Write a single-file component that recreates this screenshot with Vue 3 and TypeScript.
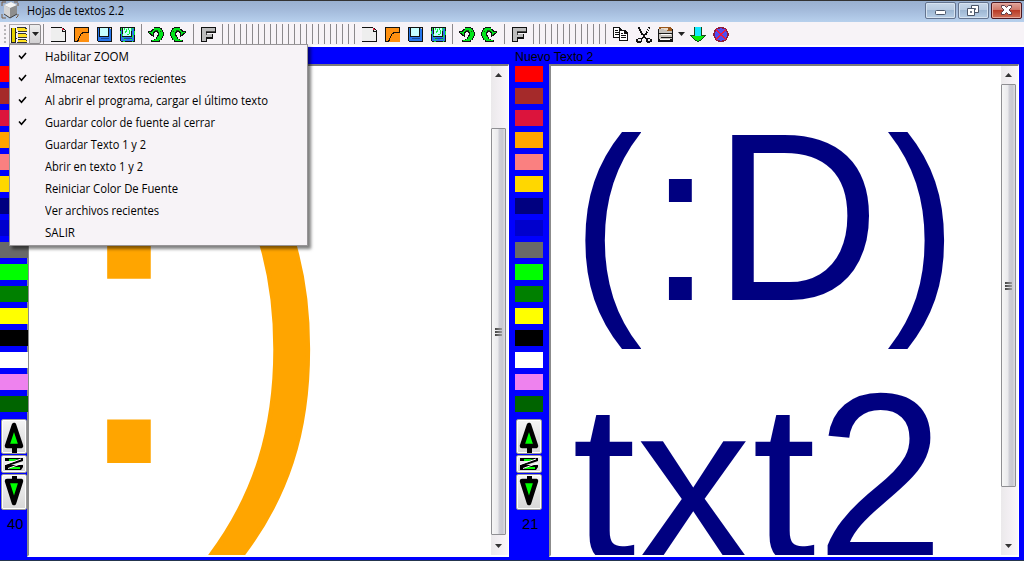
<script setup lang="ts">
interface Pane {
  id: string
  title: string
  size: number
  text: string[]
}

interface MenuEntry {
  label: string
  checked: boolean
  width: number
}

const palette: string[] = [
  '#ff0000', '#a52a2a', '#dc143c', '#ffa500', '#fa8080', '#ffd700', '#000080', '#0000cd',
  '#696969', '#00ff00', '#008000', '#ffff00', '#000000', '#ffffff', '#ee82ee', '#006400',
]

const panes: Pane[] = [
  { id: 'one', title: '', size: 40, text: [':)'] },
  { id: 'two', title: 'Nuevo Texto 2', size: 21, text: ['(:D)', 'txt2'] },
]

const menu: MenuEntry[] = [
  { label: 'Habilitar ZOOM', checked: true, width: 84 },
  { label: 'Almacenar textos recientes', checked: true, width: 141 },
  { label: 'Al abrir el programa, cargar el último texto', checked: true, width: 223 },
  { label: 'Guardar color de fuente al cerrar', checked: true, width: 170 },
  { label: 'Guardar Texto 1 y 2', checked: false, width: 101 },
  { label: 'Abrir en texto 1 y 2', checked: false, width: 98 },
  { label: 'Reiniciar Color De Fuente', checked: false, width: 133 },
  { label: 'Ver archivos recientes', checked: false, width: 114 },
  { label: 'SALIR', checked: false, width: 30 },
]

const fileTools: string[] = ['new', 'open', 'save', 'saveas', 'sep', 'undo', 'redo', 'sep', 'font']
const toolbar: string[] = [
  ...fileTools, ...Array<string>(23).fill('sep'),
  ...fileTools, ...Array<string>(13).fill('sep'),
  'copy', 'cut', 'paste', 'down', 'stop',
]

function glyphKind(char: string): string {
  if (char === '(') return 'paren-left'
  if (char === ')') return 'paren-right'
  if (char === ':') return 'colon'
  return char === 't' || char === 'x' ? 'lower' : 'upper'
}
</script>

<template>
  <div class="window">
    <header class="titlebar">
      <svg class="app-icon" width="18" height="18" viewBox="0 0 18 18">
        <path d="M1 1h4M13 1h4M1 1v4M17 2v3M1 13v4h4M17 13v2l-2 2" stroke="#765b42" fill="none" />
        <path d="M3 4l7-3 6 3v9l-7 4-6-4z" fill="#8d8d8d" />
        <path d="M3 4l7-3 6 3-7 3z" fill="#f4f4f4" />
        <path d="M3 4l6 3v10l-6-4z" fill="#d3d3d3" />
        <path d="M3 13l6 4 7-4" stroke="#404040" fill="none" />
      </svg>
      <svg class="caption" width="110" height="20"><text x="0" y="14" textLength="97" lengthAdjust="spacingAndGlyphs">Hojas de textos 2.2</text></svg>
      <div class="controls">
        <span class="control"><svg width="29" height="14" viewBox="0 0 29 14"><rect x="9.5" y="7.5" width="10" height="4" rx="1" fill="#fff" stroke="#4b5669" /></svg></span>
        <span class="control">
          <svg width="29" height="14" viewBox="0 0 29 14" fill="#fff" stroke="#4b5669">
            <path d="M12.500 2.500h7v7h-7z" /><path d="M15.500 5.500h1v1h-1z" fill="#aebfd3" />
            <path d="M8.500 5.500h7v7h-7z" /><path d="M11.500 8.500h1v1h-1z" fill="#aebfd3" />
          </svg>
        </span>
        <span class="control close">
          <svg width="29" height="14" viewBox="0 0 29 14"><path d="M9.500 2.500h3l2 2 2-2h3v2l-2.500 2.500 2.500 2.500v2h-3l-2-2-2 2h-3v-2L12 7 9.500 4.500z" fill="#fff" stroke="#5c3c46" /></svg>
        </span>
      </div>
    </header>

    <nav class="toolbar">
      <div class="grip"></div>
      <div class="menu-button">
        <svg width="18" height="17" viewBox="0 0 18 17" shape-rendering="crispEdges">
          <path d="M1 1h4v14H1z" fill="#e8d400" />
          <path d="M0 1h1v15H0zM4 1h1v15H4zM1 15h4v1H1z" fill="#222" />
          <path d="M6 1h10v3H7zM7 7h9v3H7zM7 13h9v2H7z" fill="#ffe020" />
          <path d="M6 0h9v1H6zM7 4h9v1H7zM7 6h8v1H7zM7 10h9v1H7zM7 12h8v1H7zM6 15h10v1H6zM14 1h2v1h-2zM15 7h1v1h-1zM15 13h1v1h-1zM5 5h1v1H5zM5 11h1v1H5z" fill="#333" />
        </svg>
      </div>
      <div class="menu-arrow"><svg width="7" height="4"><path d="M0 0h7L3.500 4z" fill="#222" /></svg></div>
      <span class="first-separator"></span>
      <div v-for="(tool, i) in toolbar" :key="i" class="tool" :class="tool">
        <svg v-if="tool !== 'sep'" class="glyph" width="17" height="16" viewBox="0 0 17 16" shape-rendering="crispEdges">
          <template v-if="tool === 'new'">
            <path d="M0 0h11l4 4v11H0z" fill="#eee" />
            <path d="M0 0h11v1H0zM14 4h1v11H0v-1h14zM11 1h1v3h2v1h-3zM12 1h1v1h-1zM13 2h1v1h-1zM14 3h1v1h-1z" fill="#111" />
            <path d="M11 1h1v1h1v1h-2z" fill="#e31b38" />
          </template>
          <template v-else-if="tool === 'open'">
            <path d="M0 0h15v15H0z" fill="#ff9010" />
            <path d="M0 0h15v1H0zM0 0h1v15H0zM0 14h4v1H0zM3 13h2v1H3zM4 11h1v2H4zM5 9h1v2H5zM6 7h1v2H6zM7 6h2v1H7zM8 5h7v1H8zM14 0h1v6h-1z" fill="#17120c" />
          </template>
          <template v-else-if="tool === 'save' || tool === 'saveas'">
            <path d="M0 0h15v15H1l-1-1z" fill="#111" />
            <path d="M1 1h13v13H1z" fill="#2676ec" />
            <path d="M2 0h10v10H2z" fill="#111" />
            <path d="M3 1h8v8H3z" fill="#c6ffff" />
            <path d="M4 11h8v1H4z" fill="#194998" />
            <path d="M13 1h1v1h-1z" fill="#ffdf9a" />
            <path v-if="tool === 'saveas'" d="M1 1h1v2H1zM0 4h1v3H0zM2 7h1v2H2zM3 10h1v1H3zM4 12h2v1H4zM4 1h1v2H4zM5 4h1v2H5zM6 2h1v3H6zM8 1h1v2H8zM9 3h1v4H9zM11 1h1v3h-1zM7 7h2v1H7zM12 8h1v3h-1zM14 4h1v4h-1zM10 12h2v1h-2zM3 14h2v1H3zM12 14h1v1h-1zM13 1h1v1h-1z" fill="#12ef39" />
          </template>
          <g v-else-if="tool === 'undo' || tool === 'redo'" :transform="tool === 'redo' ? 'translate(16 0) scale(-1 1)' : undefined">
            <path d="M6 0h6v1h2v2h1v2h1v4h-1v2h-1v2h-2v2H3v-2h3v-1h2v-2h1V8h1V6H9V5H7v1H6v4H5V9H3V8H2V7H1V6H0V4h3V3h1V2h2z" fill="#111" />
            <path d="M6 1h6v1h1v1h1v2h1v4h-1v2h-1v2h-2v1H4v-1h3v-1h2v-2h1V9h1V5h-1V4H6v1H5v3H4V7H3V6H1V5h3V4h1V3h1z" fill="#00e51a" />
            <path d="M7 3h3v1H7zM12 4h1v1h-1z" fill="#165715" />
          </g>
          <template v-else-if="tool === 'font'">
            <path d="M0 0h15v6H6v1h6v5H6v3H0z" fill="#111" />
            <path d="M1 1h13v4H5v2h6v3H5v4H1z" fill="#bcbcbc" />
            <path d="M5 5h9V4H5zM6 6h-1v2h1z" fill="#4a4a4a" />
          </template>
          <template v-else-if="tool === 'copy'">
            <path d="M0 0h6l3 3v8H0z" fill="#111" /><path d="M1 1h5v3h2v6H1z" fill="#fff" />
            <path d="M6 3h6l3 3v8H6z" fill="#111" /><path d="M7 4h4v3h3v6H7z" fill="#fff" />
            <path d="M2 3h3v1H2zM2 5h4v1H2zM2 7h4v1H2zM8 6h2v1H8zM8 8h5v1H8zM8 10h5v1H8z" fill="#111" />
          </template>
          <template v-else-if="tool === 'cut'">
            <path d="M2 0h2v2h1v2h1v2h1v1h2V6h1V4h1V2h1V0h2v2h-1v2h-1v2h-1v2H9v2h1v1h4v1h2v3h-2v1h-3v-1h-1v-3H9v-1H7v1H6v3H5v1H1v-1H0v-3h2v-1h4v-1h1V8H5V6H4V4H3V2H2z" fill="#111" />
            <path d="M4 1h1v2h1v2h1v1H6V4H5V2H4zM12 1h1v2h-1zM11 3h1v2h-1zM2 12h3v2H2zM12 12h2v2h-2z" fill="#eee" />
          </template>
          <template v-else-if="tool === 'paste'">
            <path d="M0 2h15v13H0z" fill="#161616" />
            <path d="M1 2h13v10H1z" fill="#c4c0bb" />
            <path d="M1 0h12v1h1v3H9V3H6V2H1z" fill="#9b571b" />
            <path d="M3 1h7v2H6V2H3z" fill="#e8d9c8" />
            <path d="M1 6h13v1H1zM3 10h11v1H3z" fill="#171717" />
            <path d="M3 7h10v1H3zM2 12h10v1H2z" fill="#fff" />
          </template>
          <template v-else-if="tool === 'down'">
            <path d="M4 0h8v8h4v1h-1v1h-1v1h-1v1h-1v1h-1v1h-2v1H7v-1H5v-1H4v-1H3v-1H2v-1H1V9H0V8h4z" fill="#174b17" />
            <path d="M5 0h6v9H5z" fill="#12e9ff" />
            <path d="M2 9h12v1h-1v1h-1v1h-1v1H9v1H7v-1H5v-1H4v-1H3v-1H2z" fill="#0aed0a" />
          </template>
          <template v-else>
            <circle cx="8" cy="7.500" r="7" fill="#514cf0" stroke="#8c1c40" stroke-width="1.500" />
            <path d="M3 2.500l10 10M13 2.500L3 12.500" stroke="#ed183c" stroke-width="1.400" />
          </template>
        </svg>
        <svg v-if="tool === 'paste'" class="drop" width="7" height="4"><path d="M0 0h7L3.500 4z" fill="#222" /></svg>
      </div>
    </nav>

    <main class="workspace">
      <section v-for="pane in panes" :key="pane.id" class="pane" :class="pane.id">
        <h2 class="pane-title">{{ pane.title }}</h2>
        <div class="pane-body">
          <aside class="side">
            <i v-for="color in palette" :key="color" class="swatch" :style="{ background: color }"></i>
            <div class="steppers">
              <span class="step tall"><svg width="22" height="33" viewBox="0 0 22 33"><path d="M11 5L18 26H4z" fill="#0f0" stroke="#000" stroke-width="4.500" stroke-linejoin="round" /><path d="M9 28h5v5H9z" /></svg></span>
              <span class="step"><svg width="22" height="16" viewBox="0 0 22 16"><path d="M2 2h18v3L8 9h12v2l-2 3H2V9l11-4H2z" fill="#000" /><path d="M6 3h9l-4 2H6zM6 13h11v-2H9z" fill="#0f0" /><path d="M2 8.500L18 3M5 12.500L20 7" stroke="#fff" stroke-width="1" fill="none" /></svg></span>
              <span class="step tall bottom"><svg width="22" height="34" viewBox="0 0 22 34"><path d="M11 28L18 6H4z" fill="#0f0" stroke="#000" stroke-width="4.500" stroke-linejoin="round" /><path d="M9 1h5v4H9z" /></svg></span>
            </div>
            <span class="size">{{ pane.size }}</span>
          </aside>
          <div class="editor">
            <div class="document">
              <div v-for="line in pane.text" :key="line" class="line"><span v-for="(char, n) in line" :key="n" :class="glyphKind(char)">{{ char }}</span></div>
            </div>
            <div class="scrollbar">
              <svg class="arrow" width="7" height="4"><path d="M0 4h7L3.500 0z" fill="#333" /></svg>
              <div class="thumb"><i></i><i></i><i></i></div>
              <svg class="arrow" width="7" height="4"><path d="M0 0h7L3.500 4z" fill="#333" /></svg>
            </div>
          </div>
        </div>
      </section>
    </main>
    <footer class="edge"></footer>

    <ul class="menu">
      <li v-for="entry in menu" :key="entry.label">
        <svg class="check" width="9" height="8"><path v-if="entry.checked" d="M1 3.500l2.500 2.700L8 1" stroke="#000" stroke-width="1.600" fill="none" /></svg>
        <svg class="label" width="250" height="22"><text x="0" y="15" :textLength="entry.width" lengthAdjust="spacingAndGlyphs">{{ entry.label }}</text></svg>
      </li>
    </ul>
  </div>
</template>

<style>
body { margin: 0; overflow: hidden; }
</style>

<style scoped>
* { box-sizing: border-box; }
svg { display: block; flex: none; }
.window { position: relative; display: flex; flex-direction: column; width: 1024px; height: 561px; overflow: hidden; background: #00f; font-family: "Open Sans", sans-serif; }
.titlebar { display: flex; height: 22px; flex: none; border-top: 1px solid #333; background: linear-gradient(#99b0d0, #a4bbdb 45%, #b7d0ed); }
.app-icon { margin-left: 1px; }
.caption { margin-left: 8px; font-size: 12px; }
.controls { display: flex; gap: 2px; margin-left: auto; padding: 1px 2px 0 0; }
.control { width: 31px; height: 17px; border: 1px solid #64748f; border-radius: 2px; background: linear-gradient(#c6d6e8, #b8cbe1 45%, #9eb7d3 50%, #b7cee6); box-shadow: inset 0 0 0 1px #d6e3f1; }
.control.close { border-color: #4c1720; background: linear-gradient(#dfa49b, #cf7869 45%, #b93b27 50%, #cf7059); box-shadow: inset 0 0 0 1px #e6a99e; }
.toolbar { display: flex; flex: none; height: 25px; background: #f7f3f7; border-bottom: 2px solid #fff; }
.grip { width: 2px; height: 18px; margin: 3px 3px 0 4px; background: repeating-linear-gradient(#b8b5b8 0 2px, transparent 2px 4px); }
.menu-button { width: 20px; height: 20px; margin-top: 2px; padding: 2px 1px; border: 1px solid #aaa6aa; border-right: 0; background: #f7f3f7; }
.menu-arrow { display: flex; justify-content: center; width: 12px; height: 20px; margin-top: 2px; padding-top: 7px; border: 1px solid #8e8b8e; border-radius: 0 2px 2px 0; background: linear-gradient(#eee, #d2d0d2); }
.first-separator { width: 1px; height: 20px; margin: 2px 4px 0 2px; background: #8c898c; }
.tool { display: flex; flex: none; width: 23px; padding: 5px 0 0 3px; }
.tool.sep { width: 6px; padding: 2px 0 0 1px; }
.tool.sep::before { content: ""; width: 1px; height: 20px; background: #8c898c; }
.tool.undo, .tool.redo { padding-left: 2px; }
.tool.redo { padding-left: 1px; }
.tool.paste { width: 31px; padding-left: 2px; }
.drop { margin: 5px 0 0 3px; }
.workspace { display: flex; flex: none; height: 513px; }
.pane { display: flex; flex-direction: column; width: 509px; }
.pane.two { width: 510px; padding-left: 6px; }
.pane-title { height: 17px; margin: 0; font: 12.300px/20px "Liberation Sans", Arial, sans-serif; color: #000; flex: none; }
.pane-body { display: flex; height: 493px; }
.side { display: flex; flex-direction: column; flex: none; width: 27px; padding-top: 2px; position: relative; z-index: 1; }
.two .side { width: 34px; }
.swatch { flex: none; width: 28px; height: 16px; margin-bottom: 6px; }
.steppers { display: flex; flex-direction: column; gap: 1px; width: 26px; margin-left: 1px; padding-top: 1px; }
.step { display: flex; justify-content: center; height: 18px; border: 1px solid #999; border-radius: 2px; background: linear-gradient(#f5f5f5, #d7d7d7); box-shadow: inset 0 0 0 1px #fff; }
.step.tall { height: 35px; }
.step.tall.bottom { height: 36px; }
.size { margin: 4px 0 0 7px; font: 14.670px/20px "Liberation Sans", Arial, sans-serif; color: #000; }
.editor { display: flex; flex: 1; border-top: 2px solid #7c7c7c; border-left: 2px solid #8b8b8b; border-right: 1px solid #fff; border-bottom: 2px solid #fff; background: #fff; overflow: hidden; }
.document { flex: 1; min-width: 0; height: 489px; overflow: hidden; font-family: "Liberation Sans", Arial, sans-serif; white-space: nowrap; }
.line span { display: inline-block; }
.one .document { padding-left: 38px; font-size: 440px; line-height: 506px; color: #ffa500; }
.one .line { height: 506px; margin-top: -8px; }
.one .colon { transform: scale(1.04, .98); transform-origin: 40px 405px; }
.one .paren-right { transform: scale(.84, 1.01); transform-origin: 118px 290px; -webkit-text-stroke: 5px #ffa500; }
.two .document { padding-left: 21px; font-size: 231px; line-height: 260px; color: #000080; }
.two .line { height: 260px; }
.two .line:first-child { margin-top: 24px; }
.two .upper { transform: scale(1, 1.037); transform-origin: 0 210px; }
.two .lower { transform: scale(.995, .975); transform-origin: 0 210px; }
.two .colon { transform: scale(1.04, .99); transform-origin: 50px 210px; }
.two .paren-left { transform: scaleX(.87); transform-origin: 14px 50%; -webkit-text-stroke: 2px #000080; }
.two .paren-right { transform: scaleX(.87); transform-origin: 68px 50%; -webkit-text-stroke: 2px #000080; }
.scrollbar { display: flex; flex-direction: column; align-items: center; flex: none; width: 17px; padding-right: 2px; background: linear-gradient(90deg, #ebe9eb, #f4f0f4 60%, #faf7fa); }
.arrow { margin-top: 7px; }
.thumb { display: flex; flex-direction: column; justify-content: center; align-items: center; gap: 1px; width: 15px; height: 407px; margin-top: 51px; border: 1px solid #8f8f93; border-radius: 1px; background: linear-gradient(90deg, #f6f6f6, #eaeaed 45%, #cfcfd6 55%, #c8c8d0 80%, #dddde2); }
.two .thumb { height: 403px; margin-top: 7px; }
.thumb i { width: 7px; height: 2px; background: linear-gradient(90deg, #444, #999); }
.thumb + .arrow { margin-top: auto; margin-bottom: 7px; }
.edge { height: 1px; background: #25364e; }
.menu { position: absolute; left: 9px; top: 44px; width: 299px; height: 202px; margin: 0; padding: 1px 0 0; border: 1px solid #979497; background: #f7f3f7; list-style: none; box-shadow: 3px 3px 3px rgba(0, 0, 0, .5); z-index: 3; }
.menu li { display: flex; height: 22px; }
.check { margin: 6px 18px 0 8px; }
.label { font-size: 12px; }
</style>
